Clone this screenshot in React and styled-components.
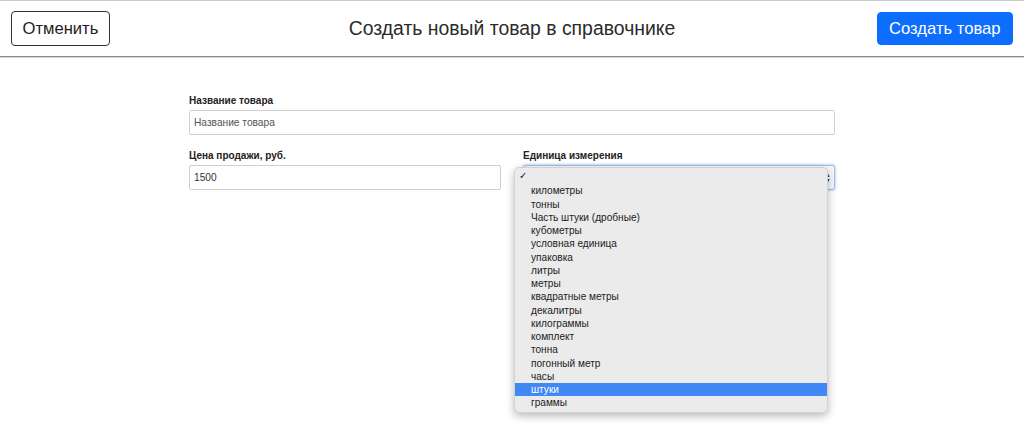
import React from "react";
import styled, { createGlobalStyle } from "styled-components";

const Global = createGlobalStyle`
  html, body { margin: 0; padding: 0; background: #fff; }
  body { font-family: "Liberation Sans", Arial, sans-serif; color: #222; }
  #root { min-height: 100vh; }
  * { box-sizing: border-box; }
`;

const Page = styled.div`
  min-height: 436px;
`;

const Header = styled.header`
  display: grid;
  grid-template-columns: 1fr auto 1fr;
  align-items: center;
  height: 57px;
  padding: 0 11px;
  border-top: 1px solid #c9c9c9;
  border-bottom: 1px solid #8a8a8a;
  box-shadow: 0 1px 0 #d6d6d6;
`;

const Title = styled.h1`
  margin: 0;
  font-size: 19.4px;
  font-weight: 400;
  color: #2b2b2b;
`;

const Side = styled.div`
  display: flex;
  justify-content: ${(p) => (p.$end ? "flex-end" : "flex-start")};
`;

const Button = styled.button`
  font-family: "Liberation Sans", Arial, sans-serif;
  font-size: 16.6px;
  height: ${(p) => (p.$primary ? "33px" : "35px")};
  padding: ${(p) => (p.$primary ? "0 11.5px" : "0 10.5px")};
  border-radius: 4px;
  cursor: pointer;
  border: 1px solid ${(p) => (p.$primary ? "#0d6efd" : "#333")};
  background: ${(p) => (p.$primary ? "#0d6efd" : "#fff")};
  color: ${(p) => (p.$primary ? "#fff" : "#222")};
`;

const Form = styled.form`
  width: 646px;
  margin: 38px 0 0 189px;
  display: flex;
  flex-direction: column;
  gap: 15px;
`;

const Row = styled.div`
  display: grid;
  grid-template-columns: 312px 312px;
  column-gap: 22px;
`;

const Field = styled.div`
  display: flex;
  flex-direction: column;
  gap: 3px;
  position: relative;
`;

const Label = styled.label`
  font-size: 10px;
  font-weight: 700;
  color: #222;
  line-height: 12px;
`;

const Input = styled.input`
  height: 25px;
  width: 100%;
  border: 1px solid #cfcfcf;
  border-radius: 2px;
  padding: 0 4px;
  font-family: "Liberation Sans", Arial, sans-serif;
  font-size: 10.2px;
  color: #333;
  outline: none;
  &::placeholder { color: #555; }
`;

const SelectBox = styled.div`
  height: 25px;
  width: 100%;
  border: 1px solid #9fc0ea;
  border-radius: 3px;
  box-shadow: 0 0 2px 1px rgba(90, 150, 230, 0.35);
  background: #f7f7f7;
  position: relative;
`;

const Arrows = styled.span`
  position: absolute;
  right: 3px;
  top: 6px;
  font-size: 7px;
  line-height: 6px;
  color: #333;
  display: flex;
  flex-direction: column;
`;

const Menu = styled.ul`
  position: absolute;
  left: -10px;
  top: 1px;
  width: 314px;
  margin: 0;
  padding: 3px 0 2px;
  list-style: none;
  background: #ebebeb;
  border: 1px solid #d2d2d2;
  border-radius: 5px;
  box-shadow: 0 3px 8px rgba(0, 0, 0, 0.28);
  z-index: 5;
`;

const Item = styled.li`
  height: 13.25px;
  line-height: 13.25px;
  font-size: 10.1px;
  padding-left: ${(p) => (p.$check ? "4px" : "16px")};
  margin-top: ${(p) => (p.$check ? "-2px" : "0")};
  margin-bottom: ${(p) => (p.$check ? "2px" : "0")};
  background: ${(p) => (p.$active ? "#3f88f6" : "transparent")};
  color: ${(p) => (p.$active ? "#fff" : "#222")};
  white-space: nowrap;
`;

const units = [
  "километры",
  "тонны",
  "Часть штуки (дробные)",
  "кубометры",
  "условная единица",
  "упаковка",
  "литры",
  "метры",
  "квадратные метры",
  "декалитры",
  "килограммы",
  "комплект",
  "тонна",
  "погонный метр",
  "часы",
  "штуки",
  "граммы",
];

export default function App() {
  return (
    <Page>
      <Global />
      <Header>
        <Side>
          <Button type="button">Отменить</Button>
        </Side>
        <Title>Создать новый товар в справочнике</Title>
        <Side $end>
          <Button type="button" $primary>
            Создать товар
          </Button>
        </Side>
      </Header>
      <Form onSubmit={(e) => e.preventDefault()}>
        <Field>
          <Label>Название товара</Label>
          <Input placeholder="Название товара" />
        </Field>
        <Row>
          <Field>
            <Label>Цена продажи, руб.</Label>
            <Input defaultValue="1500" />
          </Field>
          <Field>
            <Label>Единица измерения</Label>
            <SelectBox>
              <Arrows>
                <span>▲</span>
                <span>▼</span>
              </Arrows>
              <Menu>
                <Item $check>✓</Item>
                {units.map((u) => (
                  <Item key={u} $active={u === "штуки"}>
                    {u}
                  </Item>
                ))}
              </Menu>
            </SelectBox>
          </Field>
        </Row>
      </Form>
    </Page>
  );
}
